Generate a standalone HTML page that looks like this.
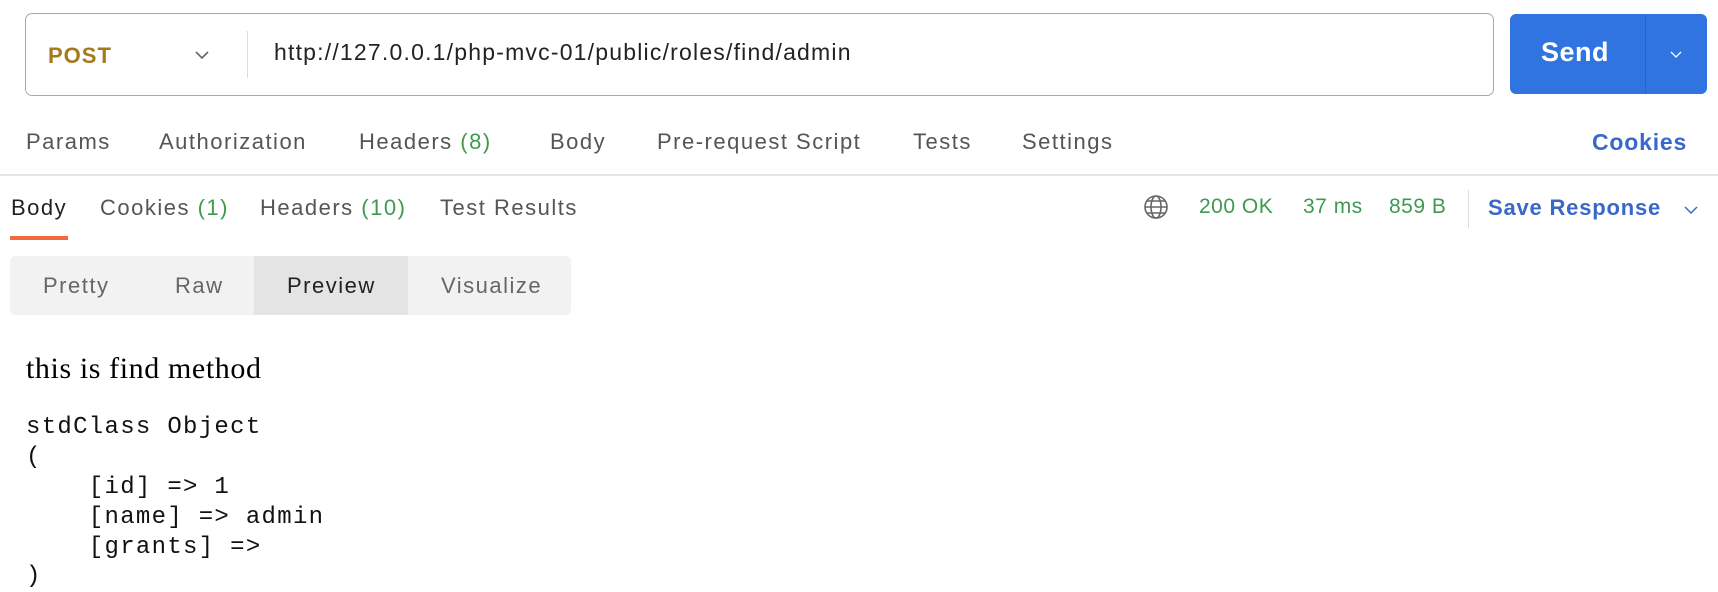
<!DOCTYPE html>
<html><head><meta charset="utf-8"><style>
*{margin:0;padding:0;box-sizing:border-box}
body{width:1718px;height:592px;background:#fff;position:relative;overflow:hidden;font-family:"Liberation Sans",sans-serif;letter-spacing:1.5px}
.a{position:absolute;white-space:nowrap}
.tab{font-size:22px;color:#555;top:129px}
.rt{font-size:22px;color:#555;top:195px}
.g{color:#3f9a4f}
.m{font-family:"Liberation Mono",monospace;font-size:24px;color:#111;left:26px;letter-spacing:1.3px;white-space:pre}
</style></head><body>
<div class="a" style="left:25px;top:13px;width:1469px;height:83px;border:1.5px solid #a9a9a9;border-radius:7px"></div>
<div class="a" style="left:48px;top:43px;font-size:22px;font-weight:bold;color:#a47a1e;letter-spacing:1px">POST</div>
<svg class="a" style="left:194px;top:50px" width="16" height="10"><path d="M2 2l6 6 6-6" fill="none" stroke="#666" stroke-width="1.6"/></svg>
<div class="a" style="left:247px;top:31px;width:1px;height:47px;background:#ddd"></div>
<div class="a" style="left:274px;top:39px;font-size:23px;color:#222;letter-spacing:1.2px">http://127.0.0.1/php-mvc-01/public/roles/find/admin</div>
<div class="a" style="left:1510px;top:14px;width:197px;height:80px;background:#2f74e1;border-radius:6px"></div>
<div class="a" style="left:1645px;top:14px;width:1px;height:80px;background:#2a63c0"></div>
<div class="a" style="left:1541px;top:37px;font-size:27px;font-weight:bold;color:#fff;letter-spacing:0.5px">Send</div>
<svg class="a" style="left:1669px;top:50px" width="14" height="9"><path d="M2 2l5 5 5-5" fill="none" stroke="#fff" stroke-width="1.3"/></svg>
<div class="a tab" style="left:26px">Params</div>
<div class="a tab" style="left:159px">Authorization</div>
<div class="a tab" style="left:359px">Headers <span class="g">(8)</span></div>
<div class="a tab" style="left:550px">Body</div>
<div class="a tab" style="left:657px">Pre-request Script</div>
<div class="a tab" style="left:913px">Tests</div>
<div class="a tab" style="left:1022px">Settings</div>
<div class="a tab" style="left:1592px;color:#3a68c9;font-weight:bold;font-size:23px;letter-spacing:0.8px">Cookies</div>
<div class="a" style="left:0;top:174px;width:1718px;height:1.5px;background:#e6e6e6"></div>
<div class="a rt" style="left:11px;color:#222">Body</div>
<div class="a" style="left:10px;top:236px;width:58px;height:4px;background:#f26b3a"></div>
<div class="a rt" style="left:100px">Cookies <span class="g">(1)</span></div>
<div class="a rt" style="left:260px">Headers <span class="g">(10)</span></div>
<div class="a rt" style="left:440px">Test Results</div>
<svg class="a" style="left:1143px;top:194px" width="26" height="26"><g fill="none" stroke="#666" stroke-width="1.6"><circle cx="13" cy="13" r="11"/><ellipse cx="13" cy="13" rx="5" ry="11"/><path d="M2 13h22M4 7h18M4 19h18"/></g></svg>
<div class="a rt g" style="left:1199px;font-size:21px;letter-spacing:0.5px">200 OK</div>
<div class="a rt g" style="left:1303px;font-size:21px;letter-spacing:0.5px">37 ms</div>
<div class="a rt g" style="left:1389px;font-size:21px;letter-spacing:0.5px">859 B</div>
<div class="a" style="left:1468px;top:190px;width:1px;height:38px;background:#ddd"></div>
<div class="a rt" style="left:1488px;color:#3a68c9;font-weight:bold;font-size:22px;letter-spacing:0.8px">Save Response</div>
<svg class="a" style="left:1683px;top:205px" width="16" height="10"><path d="M2 2l6 6 6-6" fill="none" stroke="#3a68c9" stroke-width="1.5"/></svg>
<div class="a" style="left:10px;top:256px;width:561px;height:59px;background:#f2f2f2;border-radius:5px"></div>
<div class="a" style="left:254px;top:256px;width:154px;height:59px;background:#e4e4e4"></div>
<div class="a" style="left:43px;top:273px;font-size:22px;color:#666">Pretty</div>
<div class="a" style="left:175px;top:273px;font-size:22px;color:#666">Raw</div>
<div class="a" style="left:287px;top:273px;font-size:22px;color:#222">Preview</div>
<div class="a" style="left:441px;top:273px;font-size:22px;color:#666">Visualize</div>
<div class="a" style="left:26px;top:352px;font-family:'Liberation Serif',serif;font-size:30px;color:#000;letter-spacing:0.6px">this is find method</div>
<div class="a m" style="top:414px">stdClass Object</div>
<div class="a m" style="top:444px">(</div>
<div class="a m" style="top:474px">    [id] =&gt; 1</div>
<div class="a m" style="top:504px">    [name] =&gt; admin</div>
<div class="a m" style="top:534px">    [grants] =&gt;</div>
<div class="a m" style="top:563px">)</div>
</body></html>
